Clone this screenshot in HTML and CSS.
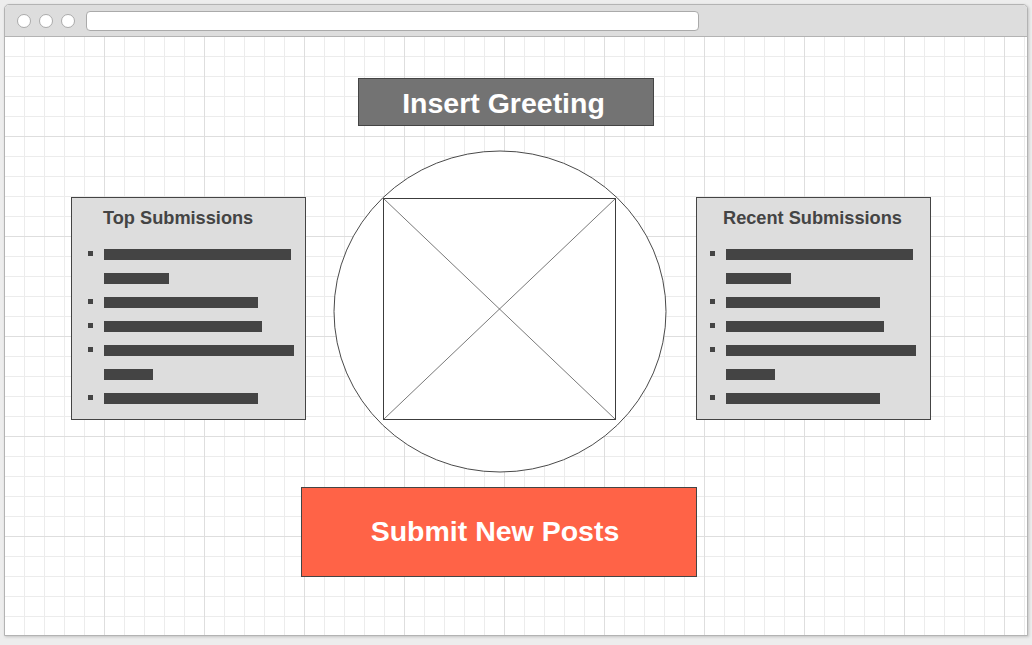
FILE: index.html
```html
<!DOCTYPE html>
<html lang="en">
<head>
<meta charset="utf-8">
<title>Wireframe</title>
<link rel="stylesheet" href="styles.css">
</head>
<body>
<div class="window">
  <div class="toolbar">
    <span class="dot"></span>
    <span class="dot"></span>
    <span class="dot"></span>
    <div class="address"></div>
  </div>
  <div class="canvas">
    <div class="greeting">Insert Greeting</div>
    <div class="stage">
      <section class="panel">
        <h2 class="panel-title">Top Submissions</h2>
        <ul class="list">
          <li><div class="lines"><span class="bar" style="width:187px"></span><span class="bar" style="width:65px"></span></div></li>
          <li><div class="lines"><span class="bar" style="width:154px"></span></div></li>
          <li><div class="lines"><span class="bar" style="width:158px"></span></div></li>
          <li><div class="lines"><span class="bar" style="width:190px"></span><span class="bar" style="width:49px"></span></div></li>
          <li><div class="lines"><span class="bar" style="width:154px"></span></div></li>
        </ul>
      </section>
      <svg class="hero" width="334" height="323" viewBox="0 0 334 323" aria-hidden="true">
        <ellipse cx="167" cy="161.5" rx="166" ry="160.5" fill="#fff" stroke="#4a4a4a" stroke-width="1"/>
        <rect x="50.5" y="48.5" width="232" height="221" fill="#fff" stroke="#3c3c3c" stroke-width="1"/>
        <line x1="50.5" y1="48.5" x2="282.5" y2="269.5" stroke="#555" stroke-width="0.8"/>
        <line x1="282.5" y1="48.5" x2="50.5" y2="269.5" stroke="#555" stroke-width="0.8"/>
      </svg>
      <section class="panel panel--right">
        <h2 class="panel-title">Recent Submissions</h2>
        <ul class="list">
          <li><div class="lines"><span class="bar" style="width:187px"></span><span class="bar" style="width:65px"></span></div></li>
          <li><div class="lines"><span class="bar" style="width:154px"></span></div></li>
          <li><div class="lines"><span class="bar" style="width:158px"></span></div></li>
          <li><div class="lines"><span class="bar" style="width:190px"></span><span class="bar" style="width:49px"></span></div></li>
          <li><div class="lines"><span class="bar" style="width:154px"></span></div></li>
        </ul>
      </section>
    </div>
    <button class="submit" type="button">Submit New Posts</button>
  </div>
</div>
</body>
</html>
```
FILE: styles.css
```css
* { box-sizing: border-box; }

html, body {
  margin: 0;
  padding: 0;
  background: #ededed;
}

body {
  padding: 4px;
  font-family: "Liberation Sans", Arial, sans-serif;
}

.window {
  width: 1024px;
  height: 632px;
  border: 1px solid #b3b3b3;
  border-radius: 5px 5px 0 0;
  background: #fff;
  box-shadow: 1px 1px 3px rgba(0, 0, 0, 0.18);
  overflow: hidden;
}

.toolbar {
  height: 32px;
  background: #dddddd;
  border-bottom: 1px solid #b3b3b3;
  display: flex;
  align-items: center;
  padding-left: 12px;
  gap: 8px;
}

.dot {
  width: 14px;
  height: 14px;
  border-radius: 50%;
  background: #fff;
  border: 1px solid #aaa;
  flex: none;
}

.address {
  width: 613px;
  height: 20px;
  margin-left: 3px;
  background: #fff;
  border: 1px solid #aaa;
  border-radius: 4px;
}

.canvas {
  height: 598px;
  display: flex;
  flex-direction: column;
  align-items: flex-start;
  padding-top: 41px;
  background-color: #fff;
  background-image:
    linear-gradient(to right, #dedede 1px, transparent 1px),
    linear-gradient(to bottom, #dedede 1px, transparent 1px),
    linear-gradient(to right, #ececec 1px, transparent 1px),
    linear-gradient(to bottom, #ececec 1px, transparent 1px);
  background-size: 100px 100px, 100px 100px, 20px 20px, 20px 20px;
  background-position: -1px -1px;
}

.greeting {
  width: 296px;
  height: 48px;
  margin-left: 353px;
  background: #737373;
  border: 1px solid #444;
  color: #fff;
  font-weight: bold;
  font-size: 28.5px;
  line-height: 43px;
  padding: 3px 5px 0 0;
  text-align: center;
  white-space: nowrap;
}

.stage {
  display: flex;
  align-items: flex-start;
  margin-top: 24px;
  padding-left: 66px;
}

.hero {
  display: block;
  flex: none;
  margin: 0 29px 0 27px;
}

.panel {
  width: 235px;
  margin-top: 47px;
  background: #dddddd;
  border: 1px solid #444;
  padding: 9px 0;
  flex: none;
}

.panel-title {
  margin: 0;
  padding-left: 31px;
  font-size: 18.2px;
  line-height: 22px;
  font-weight: bold;
  color: #444;
  white-space: nowrap;
}

.panel--right .panel-title {
  padding-left: 26px;
}

.list {
  list-style: none;
  margin: 13px 0 0;
  padding: 0;
}

.list li {
  display: flex;
  align-items: flex-start;
}

.list li::before {
  content: "";
  flex: none;
  width: 5px;
  height: 5px;
  background: #444;
  margin: 9px 11px 0 16px;
}

.panel--right .list li::before {
  margin-left: 13px;
}

.lines {
  display: flex;
  flex-direction: column;
  align-items: flex-start;
}

.bar {
  display: block;
  height: 11px;
  margin: 7px 0 6px;
  background: #444;
}

.submit {
  display: block;
  width: 396px;
  height: 90px;
  margin: 14px 0 0 296px;
  background: #ff6347;
  border: 1px solid #444;
  border-radius: 0;
  color: #fff;
  font-family: "Liberation Sans", Arial, sans-serif;
  font-weight: bold;
  font-size: 28.5px;
  line-height: 32px;
  padding: 0 8px 2px 0;
  white-space: nowrap;
  cursor: pointer;
}
```
